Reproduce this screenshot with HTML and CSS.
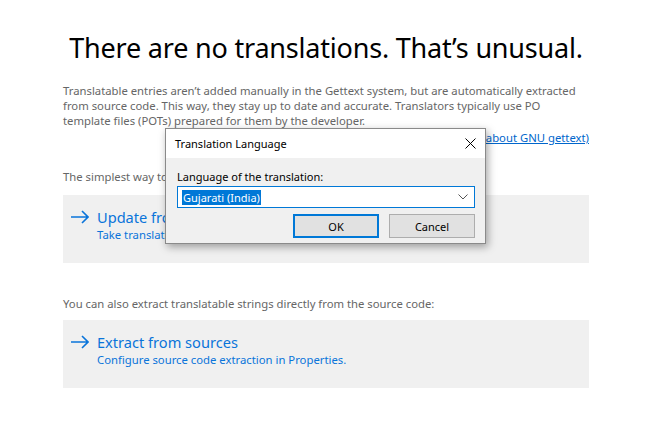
FILE: index.html
```html
<!DOCTYPE html>
<html lang="en">
<head>
  <meta charset="UTF-8" />
  <title>Translations</title>
  <link rel="stylesheet" href="styles.css">
</head>
<body>

  <div class="page">
    <h1>There are no translations. That’s unusual.</h1>

    <p class="intro">Translatable entries aren’t added manually in the Gettext system, but are automatically extracted<br>
      from source code. This way, they stay up to date and accurate. Translators typically use PO<br>
      template files (POTs) prepared for them by the developer.</p>
    <div class="more"><a href="#">(Learn more about GNU gettext)</a></div>

    <p class="hint">The simplest way to start is to update translations from a POT file:</p>
    <a class="action" href="#">
      <svg class="arrow" width="18" height="14" viewBox="0 0 18 14">
        <path d="M0 7 H17 M11 1 L17 7 L11 13" stroke="#0a74da" stroke-width="1.6" fill="none"/>
      </svg>
      <span class="action-text">
        <span class="action-title">Update from POT</span>
        <span class="action-sub">Take translatable strings from an existing POT template.</span>
      </span>
    </a>

    <p class="hint second">You can also extract translatable strings directly from the source code:</p>
    <a class="action" href="#">
      <svg class="arrow" width="18" height="14" viewBox="0 0 18 14">
        <path d="M0 7 H17 M11 1 L17 7 L11 13" stroke="#0a74da" stroke-width="1.6" fill="none"/>
      </svg>
      <span class="action-text">
        <span class="action-title">Extract from sources</span>
        <span class="action-sub">Configure source code extraction in Properties.</span>
      </span>
    </a>
  </div>

  <!-- modal dialog over the page -->
  <div class="dialog">
    <div class="dlg-title">
      <span>Translation Language</span>
      <svg class="close" width="11" height="11" viewBox="0 0 11 11">
        <path d="M0.5 0.5 L10.5 10.5 M10.5 0.5 L0.5 10.5" stroke="#000" stroke-width="1" fill="none"/>
      </svg>
    </div>
    <div class="dlg-body">
      <label class="dlg-label">Language of the translation:</label>
      <div class="combo">
        <span class="combo-value">Gujarati (India)</span>
        <svg class="chev" width="10" height="6" viewBox="0 0 10 6">
          <path d="M0.5 0.5 L5 5 L9.5 0.5" stroke="#555" stroke-width="1" fill="none"/>
        </svg>
      </div>
      <div class="buttons">
        <button class="btn default">OK</button>
        <button class="btn">Cancel</button>
      </div>
    </div>
  </div>

</body>
</html>
```

FILE: styles.css
```css
body {
  margin: 0;
  padding: 0;
  background: #fff;
  font-family: "Noto Sans", "Open Sans", sans-serif;
  font-size: 11.3px;
  color: #000;
}

.page {
  padding: 28px 65px 0 63px;
}

h1 {
  margin: 0 0 15px 0;
  font-weight: 400;
  font-size: 27px;
  letter-spacing: -0.2px;
  line-height: 40px;
  text-align: center;
  white-space: nowrap;
  color: #000;
}

.intro {
  margin: 0;
  color: #666;
  line-height: 15px;
  white-space: nowrap;
}

.more {
  text-align: right;
  line-height: 15px;
  margin-top: 2px;
}
a {
  color: #0066cc;
}

.hint {
  margin: 24px 0 11px 0;
  color: #666;
  line-height: 15px;
}
.hint.second {
  margin-top: 33px;
  margin-bottom: 9px;
}

/* --- action boxes --- */
.action {
  display: flex;
  align-items: flex-start;
  background: #f0f0f0;
  height: 68px;
  box-sizing: border-box;
  padding: 12px 8px;
  text-decoration: none;
  color: #0a74da;
}
.arrow {
  margin-top: 3px;
  margin-right: 8px;
  flex: none;
}
.action-text {
  display: flex;
  flex-direction: column;
}
.action-title {
  font-size: 14.6px;
  line-height: 20px;
}
.action-sub {
  font-size: 11.3px;
  line-height: 15px;
}

/* --- dialog --- */
.dialog {
  position: absolute;
  left: 165px;
  top: 128px;
  width: 321px;
  height: 116px;
  box-sizing: border-box;
  border: 1px solid #8a8a8a;
  background: #f0f0f0;
  box-shadow: 2px 3px 8px rgba(0,0,0,0.35);
}
.dlg-title {
  display: flex;
  justify-content: space-between;
  align-items: center;
  background: #fff;
  height: 29px;
  padding: 0 9px 0 9px;
  font-size: 11px;
}
.dlg-body {
  padding: 11px 10px 0 10px;
}
.dlg-label {
  display: block;
  font-size: 11px;
  line-height: 16px;
  margin-left: 1px;
}
.combo {
  display: flex;
  align-items: center;
  justify-content: space-between;
  height: 22px;
  box-sizing: border-box;
  border: 1px solid #0078d7;
  background: #fff;
  margin: 1px 0 0 1px;
  padding: 0 6px 0 4px;
}
.combo-value {
  background: #0078d7;
  color: #fff;
  font-size: 11px;
  line-height: 15px;
  padding: 0 1px;
}
.buttons {
  display: flex;
  justify-content: flex-end;
  gap: 10px;
  margin-top: 6px;
}
.btn {
  width: 86px;
  height: 24px;
  box-sizing: border-box;
  background: #e1e1e1;
  border: 1px solid #adadad;
  font-family: "Noto Sans", "Open Sans", sans-serif;
  font-size: 11px;
  color: #000;
  padding: 0;
}
.btn.default {
  border: 2px solid #0078d7;
}
```
